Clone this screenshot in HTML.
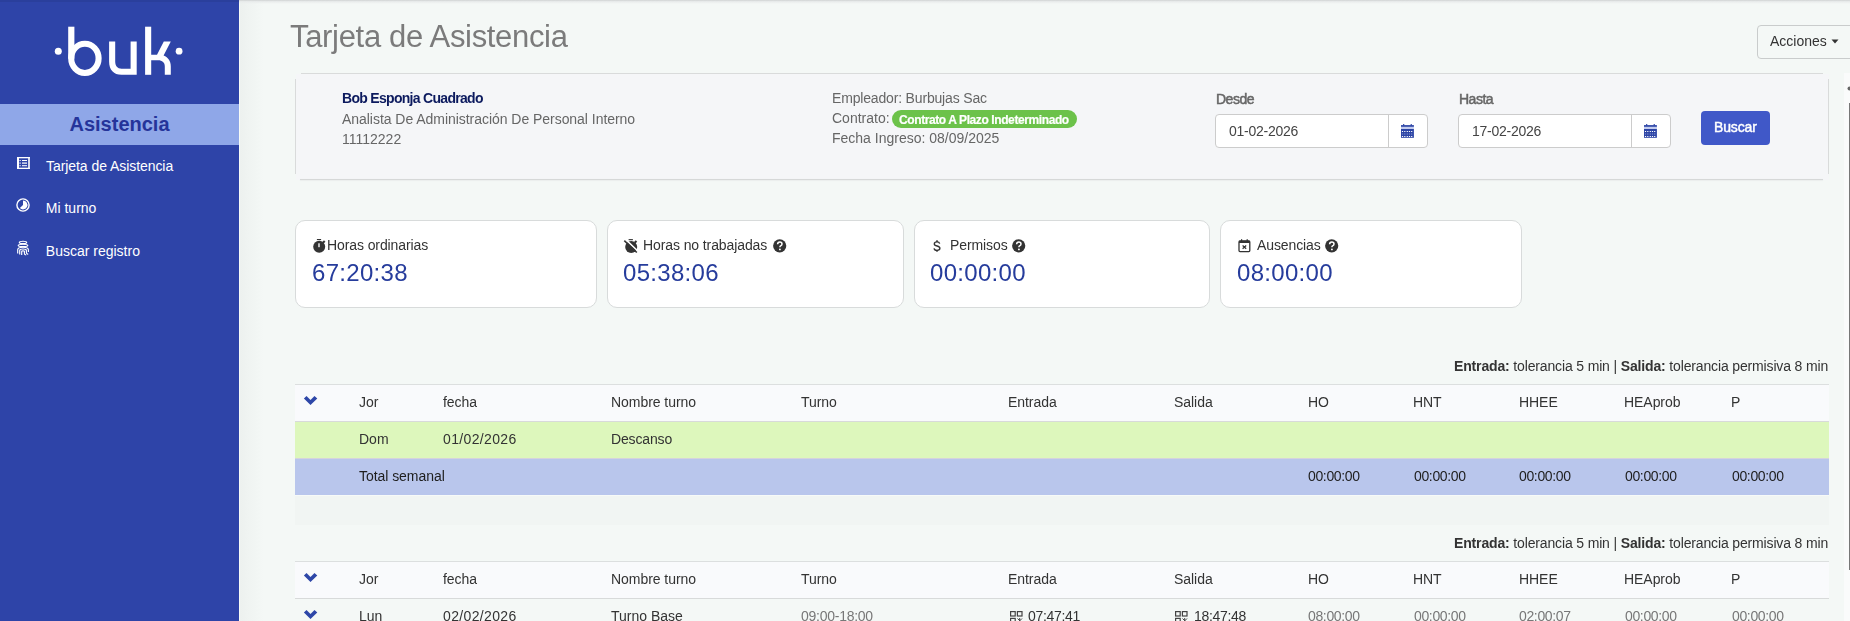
<!DOCTYPE html>
<html><head><meta charset="utf-8">
<style>
html,body{margin:0;padding:0;width:1850px;height:621px;overflow:hidden;background:#f4f8f6;font-family:"Liberation Sans",sans-serif;}
.a{position:absolute;box-sizing:border-box;}
.t{position:absolute;white-space:nowrap;line-height:1;will-change:transform;}
svg{position:absolute;overflow:visible;}
</style></head><body>
<div class="a" style="left:240px;top:0px;width:24px;height:621px;background:linear-gradient(90deg,#edf1ef,#f4f8f6)"></div>
<div class="a" style="left:239px;top:0px;width:1px;height:621px;background:#f8fbf6"></div>
<div class="a" style="left:239px;top:0px;width:1611px;height:4px;background:linear-gradient(#cfd2d2,#e9ecec 40%,rgba(244,248,246,0))"></div>
<div class="a" style="left:0px;top:0px;width:239px;height:621px;background:#2e44a8"></div>
<div class="a" style="left:0px;top:104px;width:239px;height:41px;background:#8fa7e8"></div>
<div class="a" style="left:0px;top:0px;width:239px;height:1.5px;background:rgba(0,0,0,0.07)"></div>
<svg style="left:0;top:0" width="239" height="100">
<g fill="#fff">
<circle cx="58.3" cy="51.3" r="3.5"/>
<circle cx="179.1" cy="51.2" r="3.4"/>
<rect x="68.2" y="26.7" width="6.2" height="32"/>
<path d="M109.1,41.6 L115.2,41.6 L115.2,61.5 C115.2,66 117.5,68.7 121.5,68.7 L130.6,68.7 L130.6,41.6 L136.7,41.6 L136.7,74.8 L121.5,74.8 C113.8,74.8 109.1,70 109.1,61.5 Z"/>
<rect x="145.1" y="26.7" width="6.1" height="48.1"/>
<path d="M151,54.7 L157,54.7 L163.8,41.6 L170.8,41.6 L163.6,55.6 C168.3,57.6 170.8,61.5 170.8,66.5 L170.8,74.8 L164.8,74.8 L164.8,66.5 C164.8,62.6 162.2,60.3 158.2,60.3 L151,60.3 Z"/>
</g>
<ellipse cx="84.9" cy="58.35" rx="13.7" ry="14.6" fill="none" stroke="#fff" stroke-width="6.1"/>
</svg>
<div class="t" style="left:69.50px;top:113.87px;font-size:20px;color:#25349a;font-weight:700;will-change:auto;">Asistencia</div>
<div class="t" style="left:46.00px;top:159.05px;font-size:14px;color:#fff;letter-spacing:-0.06px;will-change:auto;">Tarjeta de Asistencia</div>
<div class="t" style="left:45.80px;top:201.15px;font-size:14px;color:#fff;will-change:auto;">Mi turno</div>
<div class="t" style="left:45.80px;top:244.05px;font-size:14px;color:#fff;will-change:auto;">Buscar registro</div>
<svg style="left:0;top:0" width="239" height="300">
<g fill="#fff"><rect x="17" y="157" width="12.8" height="1.3"/><rect x="17" y="167.7" width="12.8" height="1.3"/><rect x="17" y="157" width="2" height="12"/><rect x="28.2" y="157" width="1.6" height="12"/>
<rect x="19.5" y="160" width="1.2" height="1"/><rect x="22" y="160" width="5" height="1"/><rect x="19.5" y="162.5" width="1.2" height="1.2"/><rect x="22" y="162.5" width="5" height="1.2"/><rect x="19.5" y="165.2" width="1.2" height="1"/><rect x="22" y="165.2" width="5" height="1"/></g>
<circle cx="23" cy="205" r="6.1" fill="none" stroke="#fff" stroke-width="1.4"/>
<path d="M23,200.6 A4.4,4.4 0 1 1 19.9,208.1 L23,205 Z" fill="#fff"/>
<g fill="none" stroke="#fff" stroke-width="1.15">
<ellipse cx="23" cy="242.4" rx="3.7" ry="1.2"/>
<ellipse cx="23" cy="245.4" rx="4.8" ry="1.15"/>
<path d="M17.7,253.5 V249.8 Q17.7,247.2 23,247.2 Q28.4,247.2 28.4,249.8 V252"/>
<path d="M19.7,254.6 V250.4 Q19.7,249 23,249 Q26.4,249 26.4,250.4 V252.6 Q26.4,254 28.2,254.4"/>
<path d="M21.7,255.1 V251.3 Q21.7,250.8 23,250.8 Q24.4,250.8 24.4,251.3 V253.2 Q24.4,254.8 26.2,255"/>
</g>
</svg>
<div class="t" style="left:290.30px;top:20.66px;font-size:31px;color:#7b7b7b;letter-spacing:-0.32px;">Tarjeta de Asistencia</div>
<div class="a" style="left:1757px;top:25px;width:110px;height:34px;border:1px solid #c9cccc;border-radius:4px;background:#f4f8f6"></div>
<div class="t" style="left:1770.30px;top:33.85px;font-size:14px;color:#333;">Acciones</div>
<svg style="left:1831px;top:39px" width="8" height="5"><path d="M0.5,0.5 L7.5,0.5 L4,4.5 Z" fill="#333"/></svg>
<div class="a" style="left:295.5px;top:73.5px;width:1533px;height:106px;background:#f5f6f8"></div>
<div class="a" style="left:301px;top:73px;width:1522px;height:1px;background:#d9dbdb"></div>
<div class="a" style="left:300px;top:179px;width:1523px;height:1px;background:#d6d8d8;box-shadow:0 0.5px 1px #e2e4e4"></div>
<div class="a" style="left:295px;top:79px;width:1px;height:95px;background:#d9dbdb"></div>
<div class="a" style="left:1828px;top:79px;width:1px;height:95px;background:#d9dbdb"></div>
<div class="t" style="left:341.50px;top:91.15px;font-size:14px;color:#0c1a5e;font-weight:700;letter-spacing:-0.7px;">Bob Esponja Cuadrado</div>
<div class="t" style="left:341.50px;top:111.55px;font-size:14px;color:#666;letter-spacing:-0.04px;">Analista De Administración De Personal Interno</div>
<div class="t" style="left:341.50px;top:131.55px;font-size:14px;color:#666;">11112222</div>
<div class="t" style="left:832.20px;top:90.95px;font-size:14px;color:#666;letter-spacing:-0.17px;">Empleador: Burbujas Sac</div>
<div class="t" style="left:832.20px;top:111.25px;font-size:14px;color:#666;">Contrato:</div>
<div class="a" style="left:892px;top:110px;width:185px;height:17.6px;background:#6cc24a;border-radius:9px"></div>
<div class="t" style="left:899.20px;top:113.94px;font-size:12px;color:#fff;font-weight:700;letter-spacing:-0.4px;-webkit-text-stroke:0.2px #fff;">Contrato A Plazo Indeterminado</div>
<div class="t" style="left:832.20px;top:131.15px;font-size:14px;color:#666;">Fecha Ingreso: 08/09/2025</div>
<div class="t" style="left:1215.60px;top:91.55px;font-size:14px;color:#666;letter-spacing:-0.5px;-webkit-text-stroke:0.5px #666;">Desde</div>
<div class="t" style="left:1458.50px;top:91.55px;font-size:14px;color:#666;letter-spacing:-0.5px;-webkit-text-stroke:0.5px #666;">Hasta</div>
<div class="a" style="left:1215px;top:114px;width:213px;height:34px;background:#fff;border:1px solid #ccc;border-radius:4px"></div>
<div class="a" style="left:1388px;top:114px;width:1px;height:34px;background:#ccc"></div>
<div class="t" style="left:1228.60px;top:124.15px;font-size:14px;color:#444;letter-spacing:-0.25px;">01-02-2026</div>
<svg style="left:1401px;top:124px" width="13" height="14"><g fill="#2c44a6"><rect x="2" y="0.1" width="1.3" height="1.6"/><rect x="9.6" y="0.1" width="1.3" height="1.6"/><rect x="0" y="1.1" width="12.9" height="1.8"/><rect x="0" y="5" width="12.9" height="8.8"/></g><rect x="0" y="2.9" width="12.9" height="2.1" fill="#c3ccef"/><g fill="#fff"><rect x="0.9" y="7.0" width="1.2" height="1" opacity="1"/><rect x="0.9" y="9.5" width="1.2" height="1" opacity="0.45"/><rect x="0.9" y="12.0" width="1.2" height="1" opacity="1"/><rect x="3.1999999999999997" y="7.0" width="1.2" height="1" opacity="1"/><rect x="3.1999999999999997" y="9.5" width="1.2" height="1" opacity="0.45"/><rect x="3.1999999999999997" y="12.0" width="1.2" height="1" opacity="1"/><rect x="5.7" y="7.0" width="1.2" height="1" opacity="1"/><rect x="5.7" y="9.5" width="1.2" height="1" opacity="0.45"/><rect x="5.7" y="12.0" width="1.2" height="1" opacity="1"/><rect x="7.9" y="7.0" width="1.2" height="1" opacity="1"/><rect x="7.9" y="9.5" width="1.2" height="1" opacity="0.45"/><rect x="7.9" y="12.0" width="1.2" height="1" opacity="1"/><rect x="10.1" y="7.0" width="1.2" height="1" opacity="1"/><rect x="10.1" y="9.5" width="1.2" height="1" opacity="0.45"/><rect x="10.1" y="12.0" width="1.2" height="1" opacity="1"/></g></svg>
<div class="a" style="left:1458px;top:114px;width:213px;height:34px;background:#fff;border:1px solid #ccc;border-radius:4px"></div>
<div class="a" style="left:1631px;top:114px;width:1px;height:34px;background:#ccc"></div>
<div class="t" style="left:1471.60px;top:124.15px;font-size:14px;color:#444;letter-spacing:-0.25px;">17-02-2026</div>
<svg style="left:1644px;top:124px" width="13" height="14"><g fill="#2c44a6"><rect x="2" y="0.1" width="1.3" height="1.6"/><rect x="9.6" y="0.1" width="1.3" height="1.6"/><rect x="0" y="1.1" width="12.9" height="1.8"/><rect x="0" y="5" width="12.9" height="8.8"/></g><rect x="0" y="2.9" width="12.9" height="2.1" fill="#c3ccef"/><g fill="#fff"><rect x="0.9" y="7.0" width="1.2" height="1" opacity="1"/><rect x="0.9" y="9.5" width="1.2" height="1" opacity="0.45"/><rect x="0.9" y="12.0" width="1.2" height="1" opacity="1"/><rect x="3.1999999999999997" y="7.0" width="1.2" height="1" opacity="1"/><rect x="3.1999999999999997" y="9.5" width="1.2" height="1" opacity="0.45"/><rect x="3.1999999999999997" y="12.0" width="1.2" height="1" opacity="1"/><rect x="5.7" y="7.0" width="1.2" height="1" opacity="1"/><rect x="5.7" y="9.5" width="1.2" height="1" opacity="0.45"/><rect x="5.7" y="12.0" width="1.2" height="1" opacity="1"/><rect x="7.9" y="7.0" width="1.2" height="1" opacity="1"/><rect x="7.9" y="9.5" width="1.2" height="1" opacity="0.45"/><rect x="7.9" y="12.0" width="1.2" height="1" opacity="1"/><rect x="10.1" y="7.0" width="1.2" height="1" opacity="1"/><rect x="10.1" y="9.5" width="1.2" height="1" opacity="0.45"/><rect x="10.1" y="12.0" width="1.2" height="1" opacity="1"/></g></svg>
<div class="a" style="left:1701px;top:111px;width:69px;height:34px;background:#4058c8;border-radius:4px"></div>
<div class="t" style="left:1714.20px;top:120.05px;font-size:14px;color:#fff;letter-spacing:-0.15px;-webkit-text-stroke:0.45px #fff;">Buscar</div>
<div class="a" style="left:1844px;top:73px;width:6px;height:548px;background:#fafbfb"></div>
<div class="a" style="left:1849px;top:103px;width:1px;height:467px;background:#777"></div>
<svg style="left:1846px;top:86px" width="6" height="6"><circle cx="3.5" cy="2.5" r="2" fill="#666"/></svg>
<div class="a" style="left:295px;top:220px;width:302px;height:88px;background:#fff;border:1px solid #d8dbdb;border-radius:10px"></div>
<div class="t" style="left:327.40px;top:237.75px;font-size:14px;color:#333;letter-spacing:-0.1px;">Horas ordinarias</div>
<div class="t" style="left:312.20px;top:260.98px;font-size:24px;color:#263c9c;letter-spacing:0.3px;">67:20:38</div>
<div class="a" style="left:607px;top:220px;width:297px;height:88px;background:#fff;border:1px solid #d8dbdb;border-radius:10px"></div>
<div class="t" style="left:643.00px;top:237.75px;font-size:14px;color:#333;letter-spacing:-0.1px;">Horas no trabajadas</div>
<div class="t" style="left:622.80px;top:260.98px;font-size:24px;color:#263c9c;letter-spacing:0.3px;">05:38:06</div>
<svg style="left:773px;top:238.6px" width="14" height="14"><circle cx="6.7" cy="6.8" r="6.6" fill="#333"/><path d="M4.6,5.3 Q4.6,3 6.8,3 Q9,3 9,5 Q9,6.2 7.6,6.9 Q6.9,7.3 6.9,8.3" fill="none" stroke="#fff" stroke-width="1.5"/><circle cx="6.9" cy="10.4" r="0.95" fill="#fff"/></svg>
<div class="a" style="left:914px;top:220px;width:296px;height:88px;background:#fff;border:1px solid #d8dbdb;border-radius:10px"></div>
<div class="t" style="left:950.00px;top:237.75px;font-size:14px;color:#333;letter-spacing:-0.1px;">Permisos</div>
<div class="t" style="left:930.10px;top:260.98px;font-size:24px;color:#263c9c;letter-spacing:0.3px;">00:00:00</div>
<svg style="left:1012.2px;top:238.6px" width="14" height="14"><circle cx="6.7" cy="6.8" r="6.6" fill="#333"/><path d="M4.6,5.3 Q4.6,3 6.8,3 Q9,3 9,5 Q9,6.2 7.6,6.9 Q6.9,7.3 6.9,8.3" fill="none" stroke="#fff" stroke-width="1.5"/><circle cx="6.9" cy="10.4" r="0.95" fill="#fff"/></svg>
<div class="a" style="left:1220px;top:220px;width:302px;height:88px;background:#fff;border:1px solid #d8dbdb;border-radius:10px"></div>
<div class="t" style="left:1256.50px;top:237.75px;font-size:14px;color:#333;letter-spacing:-0.1px;">Ausencias</div>
<div class="t" style="left:1236.70px;top:260.98px;font-size:24px;color:#263c9c;letter-spacing:0.3px;">08:00:00</div>
<svg style="left:1324.5px;top:238.6px" width="14" height="14"><circle cx="6.7" cy="6.8" r="6.6" fill="#333"/><path d="M4.6,5.3 Q4.6,3 6.8,3 Q9,3 9,5 Q9,6.2 7.6,6.9 Q6.9,7.3 6.9,8.3" fill="none" stroke="#fff" stroke-width="1.5"/><circle cx="6.9" cy="10.4" r="0.95" fill="#fff"/></svg>
<svg style="left:0;top:0" width="1850" height="621">
<g fill="#333">
<rect x="316.9" y="239" width="4.2" height="1.1"/>
<circle cx="319.2" cy="246.8" r="6"/>
<rect x="322.8" y="240.6" width="2" height="2.6" transform="rotate(45 323.8 241.9)"/>
</g>
<rect x="318.2" y="243.3" width="1.6" height="3.9" fill="#e0e0e0"/>
<g fill="#333">
<rect x="628.6" y="239.1" width="4.3" height="1.1"/>
<circle cx="631.2" cy="247" r="6"/>
<rect x="634.6" y="240.6" width="2" height="2.6" transform="rotate(45 635.6 241.9)"/>
</g>
<line x1="625.5" y1="239.3" x2="638.3" y2="251.5" stroke="#fff" stroke-width="1.6"/>
<line x1="624.3" y1="240.6" x2="636.8" y2="252.5" stroke="#333" stroke-width="1.6"/>
<path d="M939.7,243.7 C939.4,242.5 938.4,241.8 937,241.8 C935.3,241.8 934.3,242.6 934.3,243.9 C934.3,245.2 935.4,245.6 937.1,246 C938.8,246.4 939.9,247 939.9,248.3 C939.9,249.6 938.7,250.3 937,250.3 C935.3,250.3 934.2,249.6 934,248.3" fill="none" stroke="#333" stroke-width="1.35"/>
<path d="M937,240.2 V242 M937,250 V251.8" stroke="#333" stroke-width="1.5"/>
<rect x="1239" y="241" width="10.8" height="10.6" rx="1" fill="none" stroke="#333" stroke-width="1.3"/>
<rect x="1239" y="240.8" width="10.8" height="2.2" fill="#333"/>
<rect x="1241" y="239.2" width="1.2" height="2" fill="#333"/>
<rect x="1246.6" y="239.2" width="1.2" height="2" fill="#333"/>
<path d="M1242.6,245.5 L1246.2,248.7 M1246.2,245.5 L1242.6,248.7" stroke="#333" stroke-width="1.2"/>
</svg>
<div class="t" style="right:21.5px;top:358.55px;font-size:14px;color:#333;letter-spacing:-0.15px"><b>Entrada:</b> tolerancia 5 min | <b>Salida:</b> tolerancia permisiva 8 min</div>
<div class="a" style="left:295px;top:384px;width:1534px;height:1px;background:#dcdfdf"></div>
<div class="a" style="left:295px;top:385px;width:1534px;height:36px;background:#f9fafc"></div>
<div class="a" style="left:295px;top:421px;width:1534px;height:1px;background:#d8dada"></div>
<svg style="left:303px;top:396px" width="16" height="11"><path d="M0.9,2.5 L3.5,0 L7.5,4.1 L11.5,0 L14.3,2.5 L7.5,9 Z" fill="#2e47a8"/></svg>
<div class="t" style="left:358.80px;top:395.15px;font-size:14px;color:#333;letter-spacing:-0.05px;">Jor</div>
<div class="t" style="left:443.40px;top:395.15px;font-size:14px;color:#333;letter-spacing:-0.05px;">fecha</div>
<div class="t" style="left:610.70px;top:395.15px;font-size:14px;color:#333;letter-spacing:-0.05px;">Nombre turno</div>
<div class="t" style="left:801.10px;top:395.15px;font-size:14px;color:#333;letter-spacing:-0.05px;">Turno</div>
<div class="t" style="left:1007.70px;top:395.15px;font-size:14px;color:#333;letter-spacing:-0.05px;">Entrada</div>
<div class="t" style="left:1173.90px;top:395.15px;font-size:14px;color:#333;letter-spacing:-0.05px;">Salida</div>
<div class="t" style="left:1307.70px;top:395.15px;font-size:14px;color:#333;letter-spacing:-0.05px;">HO</div>
<div class="t" style="left:1413.10px;top:395.15px;font-size:14px;color:#333;letter-spacing:-0.05px;">HNT</div>
<div class="t" style="left:1518.50px;top:395.15px;font-size:14px;color:#333;letter-spacing:-0.05px;">HHEE</div>
<div class="t" style="left:1624.10px;top:395.15px;font-size:14px;color:#333;letter-spacing:-0.05px;">HEAprob</div>
<div class="t" style="left:1731.00px;top:395.15px;font-size:14px;color:#333;letter-spacing:-0.05px;">P</div>
<div class="a" style="left:295px;top:422px;width:1534px;height:36px;background:#ddf7bc"></div>
<div class="t" style="left:358.80px;top:431.95px;font-size:14px;color:#333;">Dom</div>
<div class="t" style="left:443.40px;top:431.95px;font-size:14px;color:#333;letter-spacing:0.35px;">01/02/2026</div>
<div class="t" style="left:611.40px;top:431.95px;font-size:14px;color:#333;letter-spacing:-0.15px;">Descanso</div>
<div class="a" style="left:295px;top:458px;width:1534px;height:1px;background:#d5d4dc"></div>
<div class="a" style="left:295px;top:459px;width:1534px;height:36px;background:#b9c6ec"></div>
<div class="t" style="left:358.80px;top:469.45px;font-size:14px;color:#1e1e1e;letter-spacing:-0.05px;">Total semanal</div>
<div class="t" style="left:1308.40px;top:469.45px;font-size:14px;color:#1e1e1e;letter-spacing:-0.35px;">00:00:00</div>
<div class="t" style="left:1413.80px;top:469.45px;font-size:14px;color:#1e1e1e;letter-spacing:-0.35px;">00:00:00</div>
<div class="t" style="left:1519.20px;top:469.45px;font-size:14px;color:#1e1e1e;letter-spacing:-0.35px;">00:00:00</div>
<div class="t" style="left:1624.80px;top:469.45px;font-size:14px;color:#1e1e1e;letter-spacing:-0.35px;">00:00:00</div>
<div class="t" style="left:1731.70px;top:469.45px;font-size:14px;color:#1e1e1e;letter-spacing:-0.35px;">00:00:00</div>
<div class="a" style="left:295px;top:495px;width:1534px;height:30px;background:#f1f5f3"></div>
<div class="a" style="left:295px;top:495px;width:1534px;height:1px;background:#f7faf8"></div>
<div class="t" style="right:21.5px;top:535.55px;font-size:14px;color:#333;letter-spacing:-0.15px"><b>Entrada:</b> tolerancia 5 min | <b>Salida:</b> tolerancia permisiva 8 min</div>
<div class="a" style="left:295px;top:561px;width:1534px;height:1px;background:#dcdfdf"></div>
<div class="a" style="left:295px;top:562px;width:1534px;height:36px;background:#f9fafc"></div>
<div class="a" style="left:295px;top:598px;width:1534px;height:1px;background:#d8dada"></div>
<svg style="left:303px;top:573px" width="16" height="11"><path d="M0.9,2.5 L3.5,0 L7.5,4.1 L11.5,0 L14.3,2.5 L7.5,9 Z" fill="#2e47a8"/></svg>
<div class="t" style="left:358.80px;top:572.15px;font-size:14px;color:#333;letter-spacing:-0.05px;">Jor</div>
<div class="t" style="left:443.40px;top:572.15px;font-size:14px;color:#333;letter-spacing:-0.05px;">fecha</div>
<div class="t" style="left:610.70px;top:572.15px;font-size:14px;color:#333;letter-spacing:-0.05px;">Nombre turno</div>
<div class="t" style="left:801.10px;top:572.15px;font-size:14px;color:#333;letter-spacing:-0.05px;">Turno</div>
<div class="t" style="left:1007.70px;top:572.15px;font-size:14px;color:#333;letter-spacing:-0.05px;">Entrada</div>
<div class="t" style="left:1173.90px;top:572.15px;font-size:14px;color:#333;letter-spacing:-0.05px;">Salida</div>
<div class="t" style="left:1307.70px;top:572.15px;font-size:14px;color:#333;letter-spacing:-0.05px;">HO</div>
<div class="t" style="left:1413.10px;top:572.15px;font-size:14px;color:#333;letter-spacing:-0.05px;">HNT</div>
<div class="t" style="left:1518.50px;top:572.15px;font-size:14px;color:#333;letter-spacing:-0.05px;">HHEE</div>
<div class="t" style="left:1624.10px;top:572.15px;font-size:14px;color:#333;letter-spacing:-0.05px;">HEAprob</div>
<div class="t" style="left:1731.00px;top:572.15px;font-size:14px;color:#333;letter-spacing:-0.05px;">P</div>
<svg style="left:303px;top:610px" width="16" height="11"><path d="M0.9,2.5 L3.5,0 L7.5,4.1 L11.5,0 L14.3,2.5 L7.5,9 Z" fill="#2e47a8"/></svg>
<div class="t" style="left:358.80px;top:609.15px;font-size:14px;color:#333;">Lun</div>
<div class="t" style="left:443.40px;top:609.15px;font-size:14px;color:#333;letter-spacing:0.35px;">02/02/2026</div>
<div class="t" style="left:611.40px;top:609.15px;font-size:14px;color:#333;">Turno Base</div>
<div class="t" style="left:801.10px;top:609.15px;font-size:14px;color:#777;letter-spacing:-0.26px;">09:00-18:00</div>
<svg style="left:1010px;top:611px" width="13" height="13"><g fill="none" stroke="#444" stroke-width="1.2"><rect x="0.6" y="0.6" width="4.6" height="4.4"/><rect x="7.4" y="0.6" width="4.6" height="4.4"/><rect x="0.6" y="7.4" width="4.6" height="4.4"/></g><path d="M7.5,7.5 L12,12 M12,7.5 L7.5,12 M9.7,7 V12.5" stroke="#444" stroke-width="1"/></svg>
<div class="t" style="left:1028.10px;top:609.15px;font-size:14px;color:#333;letter-spacing:-0.3px;">07:47:41</div>
<svg style="left:1175.3px;top:611px" width="13" height="13"><g fill="none" stroke="#444" stroke-width="1.2"><rect x="0.6" y="0.6" width="4.6" height="4.4"/><rect x="7.4" y="0.6" width="4.6" height="4.4"/><rect x="0.6" y="7.4" width="4.6" height="4.4"/></g><path d="M7.5,7.5 L12,12 M12,7.5 L7.5,12 M9.7,7 V12.5" stroke="#444" stroke-width="1"/></svg>
<div class="t" style="left:1193.50px;top:609.15px;font-size:14px;color:#333;letter-spacing:-0.3px;">18:47:48</div>
<div class="t" style="left:1308.40px;top:609.15px;font-size:14px;color:#777;letter-spacing:-0.35px;">08:00:00</div>
<div class="t" style="left:1413.80px;top:609.15px;font-size:14px;color:#777;letter-spacing:-0.35px;">00:00:00</div>
<div class="t" style="left:1519.20px;top:609.15px;font-size:14px;color:#777;letter-spacing:-0.35px;">02:00:07</div>
<div class="t" style="left:1624.80px;top:609.15px;font-size:14px;color:#777;letter-spacing:-0.35px;">00:00:00</div>
<div class="t" style="left:1731.70px;top:609.15px;font-size:14px;color:#777;letter-spacing:-0.35px;">00:00:00</div>
</body></html>
